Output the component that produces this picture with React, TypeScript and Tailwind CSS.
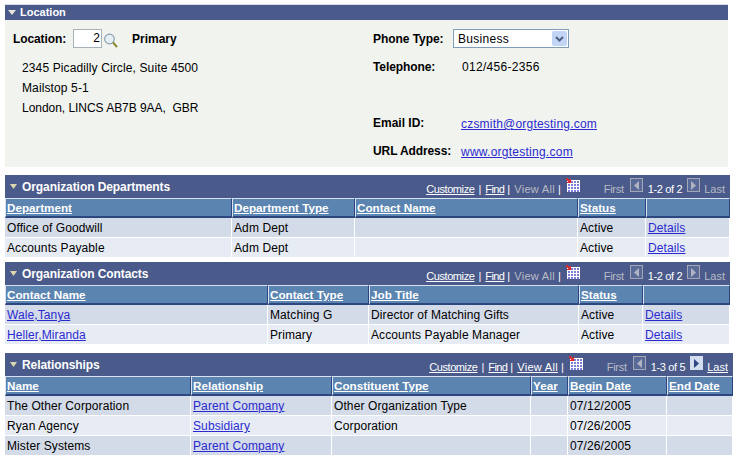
import React from "react";

const link = "text-[#2a2ad0] underline";

function Tri() {
  return (
    <svg width="7" height="5" viewBox="0 0 7 5" className="shrink-0 -mt-[1px]">
      <path d="M0 0H7L3.5 5Z" fill="#dcd6ae" />
    </svg>
  );
}

function GridIcon() {
  return (
    <svg width="14" height="14" viewBox="0 0 14 14" className="shrink-0">
      <rect x="1" y="2" width="13" height="12" fill="#ffffff" />
      {[3, 6, 9, 12].map((y) =>
        [2, 5, 8, 11].map((x) => <rect key={`${x}-${y}`} x={x} y={y} width="2" height="2" fill="#7d7dd8" />)
      )}
      <path d="M0 0L4.5 4.5" stroke="#e02a2a" strokeWidth="2" />
      <path d="M1 4.5H4.5V1" stroke="#e02a2a" strokeWidth="1.2" fill="none" />
    </svg>
  );
}

function PageBtn({ dir, on }: { dir: "l" | "r"; on?: boolean }) {
  return (
    <span
      className={`w-[13px] h-[14px] flex items-center justify-center border shrink-0 ${
        on ? "border-[#d4dcf0] bg-[#d4dcf0]" : "border-[#a4a8b4] bg-[#5a6a98]"
      }`}
    >
      <svg width="5" height="9" viewBox="0 0 5 9">
        <path d={dir === "l" ? "M5 0V9L0 4.5Z" : "M0 0V9L5 4.5Z"} fill={on ? "#2c4680" : "#b0b4c0"} />
      </svg>
    </span>
  );
}

function SectionBar({
  title,
  viewAll,
  range,
  next,
  first,
}: {
  title: string;
  viewAll?: boolean;
  range: string;
  next?: boolean;
  first: string;
}) {
  return (
    <div className={`h-[23px] bg-[#4a5a8a] flex items-center text-white pl-[5px] pr-[5px] ${first}`}>
      <Tri />
      <span className="ml-[5px] font-bold text-[12px] tracking-[-0.08px]">{title}</span>
      <div className="ml-auto self-start pt-[3px] flex items-start text-[11px] leading-[14px]">
        <span className="mt-[4px] underline tracking-[-0.4px]">Customize</span>
        <span className="mt-[4px] mx-[4px]">|</span>
        <span className="mt-[4px] underline tracking-[-0.6px]">Find</span>
        <span className="mt-[4px] ml-[3px] mr-[4px]">|</span>
        <span className={`mt-[4px] tracking-[0.3px] ${viewAll ? "underline" : "text-[#b8bcc8]"}`}>View All</span>
        <span className="mt-[4px] ml-[3px] mr-[5px]">|</span>
        <GridIcon />
        <span className="mt-[4px] ml-[24px] tracking-[-0.3px] text-[#b8bcc8]">First</span>
        <span className="ml-[6px]">
          <PageBtn dir="l" />
        </span>
        <span className="mt-[4px] ml-[5px] tracking-[-0.35px]">{range}</span>
        <span className="ml-[5px]">
          <PageBtn dir="r" on={next} />
        </span>
        <span className={`mt-[4px] ml-[4px] ${next ? "underline" : "text-[#b8bcc8]"}`}>Last</span>
      </div>
    </div>
  );
}

type Cell = { t: string; l?: boolean };

function Table({ cols, heads, rows }: { cols: string; heads: string[]; rows: Cell[][] }) {
  return (
    <div className="flex flex-col gap-[1px]">
      <div className={`grid ${cols} -mb-[1px]`}>
        {heads.map((h, i) => (
          <div
            key={i}
            className="h-[20px] bg-[#5b84b1] border-t border-l border-[#d9e2ee] border-b-2 border-b-[#2c4680] border-r border-r-[#2c4680] pl-[1px] font-bold text-[11.7px] leading-[17px] text-white underline whitespace-nowrap"
          >
            {h}
          </div>
        ))}
      </div>
      {rows.map((r, ri) => (
        <div key={ri} className={`grid ${cols}`}>
          {r.map((c, ci) => (
            <div
              key={ci}
              className={`h-[19px] border-r border-white leading-[20px] pl-[2px] text-[12px] tracking-[0.1px] whitespace-nowrap overflow-hidden ${
                ri % 2 ? "bg-[#e7ecf4]" : "bg-[#d4dbe8]"
              } ${c.l ? link : "text-black"}`}
            >
              {c.t}
            </div>
          ))}
        </div>
      ))}
    </div>
  );
}

const t = (s: string): Cell => ({ t: s });
const l = (s: string): Cell => ({ t: s, l: true });

export default function App() {
  return (
    <div className="w-[737px] h-[459px] bg-white overflow-hidden pt-[4px] pl-[5px] text-[12px] text-black font-['Liberation_Sans',Arial,sans-serif]">
      <div className="w-[723px]">
        <div className="h-[16px] bg-[#4a5a8a] border-t border-[#d8dcec] flex items-center pl-[3px] text-white">
          <svg width="8" height="5" viewBox="0 0 8 5" className="-mt-[1px]">
            <path d="M0 0H8L4 5Z" fill="#e8e6d8" />
          </svg>
          <span className="ml-[4px] font-bold text-[11px]">Location</span>
        </div>
        <div className="h-[147px] bg-[#f1f3ef] flex">
          <div className="w-[367px] pl-[8px] pt-[9px]">
            <div className="flex items-center h-[19px]">
              <span className="font-bold w-[60px] tracking-[-0.1px]">Location:</span>
              <span className="w-[29px] h-[19px] bg-white border border-[#a8b0b8] text-right pr-[1px] leading-[17px]">2</span>
              <svg width="14" height="15" viewBox="0 0 14 15" className="ml-[2px] mt-[4px] shrink-0">
                <circle cx="5.5" cy="6" r="4.8" fill="#e6f0f4" stroke="#8aa0b0" strokeWidth="1.2" />
                <path d="M9 9.5L13 14" stroke="#8a8a30" strokeWidth="2" />
              </svg>
              <span className="font-bold ml-[14px]">Primary</span>
            </div>
            <div className="pl-[9px] mt-[10px] tracking-[0.12px] leading-[20px]">
              <div>2345 Picadilly Circle, Suite 4500</div>
              <div>Mailstop 5-1</div>
              <div className="whitespace-pre tracking-[-0.04px]">London, LINCS AB7B 9AA,  GBR</div>
            </div>
          </div>
          <div className="flex-1 pt-[9px] pl-[1px]">
            <div className="flex items-center h-[19px]">
              <span className="font-bold w-[80px] tracking-[-0.05px]">Phone Type:</span>
              <span className="w-[116px] h-[19px] bg-white border border-[#7f9db9] flex items-center pl-[4px] tracking-[0.3px]">
                Business
                <span className="ml-auto mr-[1px] w-[15px] h-[15px] bg-[#c3d5f5] rounded-[2px] flex items-center justify-center">
                  <svg width="9" height="6" viewBox="0 0 9 6">
                    <path d="M1 1L4.5 4.5L8 1" stroke="#4d6185" strokeWidth="2" fill="none" />
                  </svg>
                </span>
              </span>
            </div>
            <div className="flex mt-[10px] h-[18px] items-start">
              <span className="font-bold w-[89px] tracking-[-0.1px]">Telephone:</span>
              <span className="tracking-[0.3px]">012/456-2356</span>
            </div>
            <div className="flex mt-[38px] h-[18px] items-start">
              <span className="font-bold w-[88px]">Email ID:</span>
              <span className={`${link} tracking-[0.2px] mt-[1px]`}>czsmith@orgtesting.com</span>
            </div>
            <div className="flex mt-[10px] h-[18px] items-start">
              <span className="font-bold w-[88px] tracking-[-0.1px]">URL Address:</span>
              <span className={`${link} tracking-[0.25px] mt-[1px]`}>www.orgtesting.com</span>
            </div>
          </div>
        </div>
      </div>

      <SectionBar first="mt-[8px] w-[725px]" title="Organization Departments" range="1-2 of 2" />
      <div className="w-[725px]">
        <Table
          cols="grid-cols-[227px_123px_223px_68px_84px]"
          heads={["Department", "Department Type", "Contact Name", "Status", ""]}
          rows={[
            [t("Office of Goodwill"), t("Adm Dept"), t(""), t("Active"), l("Details")],
            [t("Accounts Payable"), t("Adm Dept"), t(""), t("Active"), l("Details")],
          ]}
        />
      </div>

      <SectionBar first="mt-[5px] w-[725px]" title="Organization Contacts" range="1-2 of 2" />
      <div className="w-[725px]">
        <Table
          cols="grid-cols-[263px_101px_210px_64px_87px]"
          heads={["Contact Name", "Contact Type", "Job Title", "Status", ""]}
          rows={[
            [l("Wale,Tanya"), t("Matching G"), t("Director of Matching Gifts"), t("Active"), l("Details")],
            [l("Heller,Miranda"), t("Primary"), t("Accounts Payable Manager"), t("Active"), l("Details")],
          ]}
        />
      </div>

      <SectionBar first="mt-[9px] w-[728px]" title="Relationships" viewAll next range="1-3 of 5" />
      <div className="w-[728px]">
        <Table
          cols="grid-cols-[186px_141px_199px_37px_99px_66px]"
          heads={["Name", "Relationship", "Constituent Type", "Year", "Begin Date", "End Date"]}
          rows={[
            [t("The Other Corporation"), l("Parent Company"), t("Other Organization Type"), t(""), t("07/12/2005"), t("")],
            [t("Ryan Agency"), l("Subsidiary"), t("Corporation"), t(""), t("07/26/2005"), t("")],
            [t("Mister Systems"), l("Parent Company"), t(""), t(""), t("07/26/2005"), t("")],
          ]}
        />
      </div>
    </div>
  );
}
